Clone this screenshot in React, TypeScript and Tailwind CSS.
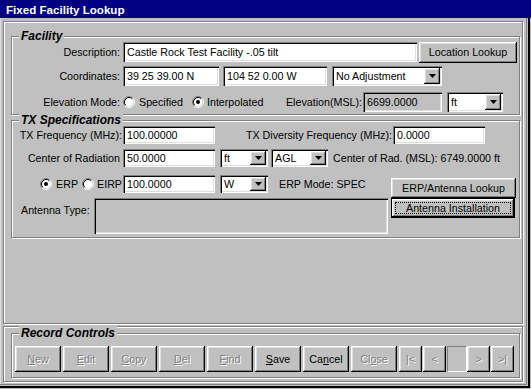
import React from "react";

const sunken =
  "shadow-[inset_1px_1px_0_#808080,inset_2px_2px_0_#000000,inset_-1px_-1px_0_#ffffff,inset_-2px_-2px_0_#dfdfdf]";
const raised =
  "shadow-[inset_-1px_-1px_0_#000000,inset_1px_1px_0_#ffffff,inset_-2px_-2px_0_#808080,inset_2px_2px_0_#dfdfdf]";
const etched =
  "border border-[#808080] shadow-[inset_1px_1px_0_#ffffff,1px_1px_0_#ffffff]";
const dim = "text-[#808080] [text-shadow:1px_1px_0_#ffffff]";

function Radio({ checked }: { checked?: boolean }) {
  return (
    <svg width="12" height="12" viewBox="0 0 12 12" className="shrink-0">
      <circle cx="6" cy="6" r="4.5" fill="#ffffff" />
      <path d="M2.11 9.89A5.5 5.5 0 0 1 9.89 2.11" fill="none" stroke="#808080" />
      <path d="M9.89 2.11A5.5 5.5 0 0 1 2.11 9.89" fill="none" stroke="#ffffff" />
      <path d="M2.82 9.18A4.5 4.5 0 0 1 9.18 2.82" fill="none" stroke="#000000" />
      <path d="M9.18 2.82A4.5 4.5 0 0 1 2.82 9.18" fill="none" stroke="#dfdfdf" />
      {checked && <circle cx="6" cy="6" r="2" fill="#000000" />}
    </svg>
  );
}

function Field({
  className,
  value,
  disabled,
}: {
  className: string;
  value?: string;
  disabled?: boolean;
}) {
  return (
    <div
      className={`${sunken} ${
        disabled ? "bg-[#c0c0c0]" : "bg-white"
      } flex items-center pl-[4px] shrink-0 whitespace-nowrap overflow-hidden ${className}`}
    >
      {value}
    </div>
  );
}

function Combo({ className, value }: { className: string; value: string }) {
  return (
    <div
      className={`${sunken} bg-white flex items-stretch p-[2px] shrink-0 ${className}`}
    >
      <span className="flex-1 flex items-center pl-[2px] whitespace-nowrap overflow-hidden">
        {value}
      </span>
      <div
        className={`${raised} bg-[#c0c0c0] w-[16px] flex items-center justify-center`}
      >
        <svg width="7" height="4" viewBox="0 0 7 4">
          <polygon points="0,0 7,0 3.5,4" fill="#000000" />
        </svg>
      </div>
    </div>
  );
}

function Btn({
  className,
  children,
  disabled,
}: {
  className: string;
  children: React.ReactNode;
  disabled?: boolean;
}) {
  return (
    <div
      className={`${raised} bg-[#c0c0c0] flex items-center justify-center shrink-0 whitespace-nowrap ${
        disabled ? dim : ""
      } ${className}`}
    >
      {children}
    </div>
  );
}

function Group({
  title,
  className,
  children,
}: {
  title: string;
  className: string;
  children: React.ReactNode;
}) {
  return (
    <div className={`${etched} relative ml-[7px] w-[509px] shrink-0 ${className}`}>
      <span className="absolute left-[7px] top-[-8px] px-[2px] bg-[#c0c0c0] text-[12px] leading-[14px] font-bold italic">
        {title}
      </span>
      {children}
    </div>
  );
}

export default function App() {
  return (
    <div className="w-[531px] h-[389px] bg-[#c0c0c0] flex flex-col overflow-hidden font-['Liberation_Sans',Arial,sans-serif] text-[10.7px] leading-[13px] text-black shadow-[inset_-1px_-1px_0_#c0c0c0,inset_-3px_-3px_0_#000000,inset_-4px_-4px_0_#c0c0c0,inset_-5px_-5px_0_#808080,inset_1px_0_0_#dfdfdf]">
      <div className="h-[18px] shrink-0 bg-[#000080] text-white font-bold text-[11.6px] flex items-center pl-[6px]">
        Fixed Facility Lookup
      </div>

      <div className={`${etched} mt-[3px] ml-[3px] w-[520px] h-[303px] shrink-0 flex flex-col`}>
        <Group title="Facility" className="mt-[14px] h-[79px] pt-[5px] flex flex-col">
          <div className="flex items-center h-[20px]">
            <span className="w-[108px] text-right">Description:</span>
            <Field
              className="ml-[3px] w-[294px] h-[20px]"
              value="Castle Rock Test Facility -.05 tilt"
            />
            <Btn className="ml-[2px] w-[98px] h-[21px]">Location Lookup</Btn>
          </div>
          <div className="flex items-center h-[20px] mt-[4px]">
            <span className="w-[108px] text-right">Coordinates:</span>
            <Field className="ml-[3px] w-[96px] h-[20px]" value="39 25 39.00 N" />
            <Field className="ml-[4px] w-[104px] h-[20px]" value="104 52 0.00 W" />
            <Combo className="ml-[5px] w-[110px] h-[20px]" value="No Adjustment" />
          </div>
          <div className="flex items-center h-[20px] mt-[6px]">
            <span className="w-[108px] text-right">Elevation Mode:</span>
            <span className="ml-[3px]">
              <Radio />
            </span>
            <span className="ml-[4px]">Specified</span>
            <span className="ml-[9px]">
              <Radio checked />
            </span>
            <span className="ml-[3px]">Interpolated</span>
            <span className="ml-auto">Elevation(MSL):</span>
            <Field className="ml-[1px] w-[79px] h-[20px]" value="6699.0000" disabled />
            <Combo className="ml-[5px] mr-[16px] w-[56px] h-[20px]" value="ft" />
          </div>
        </Group>

        <Group title="TX Specifications" className="mt-[5px] h-[118px] pt-[5px] flex flex-col">
          <div className="flex items-center h-[18px]">
            <span className="w-[110px] text-right">TX Frequency (MHz):</span>
            <Field className="ml-[1px] w-[92px] h-[18px]" value="100.00000" />
            <span className="w-[177px] text-right">TX Diversity Frequency (MHz):</span>
            <Field className="ml-[1px] w-[92px] h-[18px]" value="0.0000" />
          </div>
          <div className="flex items-center h-[18px] mt-[5px]">
            <span className="w-[108px] text-right">Center of Radiation</span>
            <Field className="ml-[3px] w-[92px] h-[18px]" value="50.0000" />
            <Combo className="ml-[5px] w-[48px] h-[18px]" value="ft" />
            <Combo className="ml-[3px] w-[57px] h-[18px]" value="AGL" />
            <span className="ml-[5px]">Center of Rad. (MSL): 6749.0000 ft</span>
          </div>
          <div className="flex mt-[8px]">
            <div className="w-[376px] flex flex-col">
              <div className="flex items-center h-[18px]">
                <div className="w-[110px] flex items-center justify-end">
                  <Radio checked />
                  <span className="ml-[4px]">ERP</span>
                  <span className="ml-[4px]">
                    <Radio />
                  </span>
                  <span className="ml-[3px]">EIRP</span>
                </div>
                <Field className="ml-[1px] w-[92px] h-[18px]" value="100.0000" />
                <Combo className="ml-[5px] w-[48px] h-[18px]" value="W" />
                <span className="ml-[11px]">ERP Mode: SPEC</span>
              </div>
              <div className="flex mt-[5px]">
                <span className="w-[82px] pl-[9px] pt-[6px]">Antenna Type:</span>
                <Field className="w-[294px] h-[36px]" disabled />
              </div>
            </div>
            <div className="ml-[3px] mt-[3px] flex flex-col">
              <Btn className="w-[125px] h-[20px]">ERP/Antenna Lookup</Btn>
              <div className="w-[124px] h-[20px] border border-black">
                <Btn className="w-full h-full px-[3px]">
                  <span className="flex-1 h-[12px] border border-dotted border-black flex items-center justify-center leading-[12px]">
                    Antenna Installation
                  </span>
                </Btn>
              </div>
            </div>
          </div>
        </Group>
      </div>

      <div className={`${etched} mt-[2px] ml-[3px] w-[520px] h-[56px] shrink-0 flex flex-col`}>
        <Group title="Record Controls" className="mt-[6px] h-[45px] pt-[12px] pl-[3px] flex">
          <div className="flex gap-[2px] h-[26px]">
            <Btn className="w-[46px] h-full" disabled>
              <u>N</u>ew
            </Btn>
            <Btn className="w-[46px] h-full" disabled>
              <u>E</u>dit
            </Btn>
            <Btn className="w-[46px] h-full" disabled>
              <u>C</u>opy
            </Btn>
            <Btn className="w-[46px] h-full" disabled>
              <u>D</u>el
            </Btn>
            <Btn className="w-[46px] h-full" disabled>
              <u>F</u>ind
            </Btn>
            <Btn className="w-[46px] h-full">
              <u>S</u>ave
            </Btn>
            <Btn className="w-[46px] h-full">
              Ca<u>n</u>cel
            </Btn>
            <Btn className="w-[46px] h-full" disabled>
              Cl<u>o</u>se
            </Btn>
          </div>
          <div className="flex ml-[2px] h-[26px]">
            <Btn className="w-[23px] h-full" disabled>
              |&lt;
            </Btn>
            <Btn className="ml-[1px] w-[23px] h-full" disabled>
              &lt;
            </Btn>
            <div className="ml-[1px] w-[20px] h-full border border-t-[#808080] border-l-[#808080] border-b-white border-r-white" />
            <Btn className="w-[23px] h-full" disabled>
              &gt;
            </Btn>
            <Btn className="ml-[1px] w-[23px] h-full" disabled>
              &gt;|
            </Btn>
          </div>
        </Group>
      </div>
    </div>
  );
}
